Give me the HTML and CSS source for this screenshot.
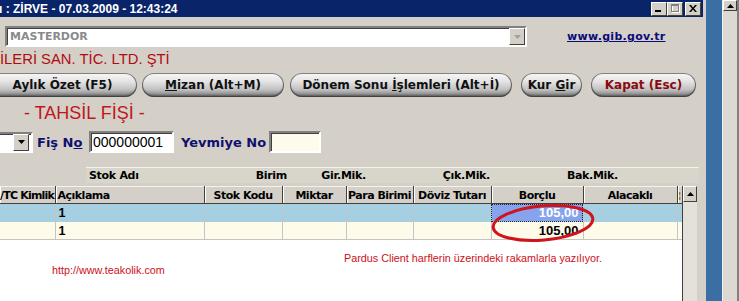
FILE: index.html
```html
<!DOCTYPE html>
<html lang="tr">
<head>
  <meta charset="UTF-8">
  <title>Tahsil Fişi</title>
  <link rel="stylesheet" href="styles.css">
</head>
<body>
  <div class="screen">
    <div class="window">
      <div class="titlebar">
        <span class="title">ı : ZİRVE - 07.03.2009 - 12:43:24</span>
        <div class="caption-btns">
          <span class="cbtn"><svg width="8" height="7" viewBox="0 0 8 7"><rect x="0" y="5" width="6" height="2" fill="#000"/></svg></span>
          <span class="cbtn"><svg width="9" height="9" viewBox="0 0 9 9"><rect x="1.5" y="1.5" width="7" height="7" fill="none" stroke="#fff"/><rect x="0.5" y="0.5" width="7" height="7" fill="none" stroke="#808080"/><rect x="0" y="1" width="8" height="1" fill="#808080"/></svg></span>
          <span class="cbtn close"><svg width="8" height="7" viewBox="0 0 8 7"><path d="M0 0h2l2 2.5L6 0h2L5 3.5 8 7H6L4 4.5 2 7H0l3-3.5z" fill="#000"/></svg></span>
        </div>
      </div>

      <div class="body">
        <div class="top-row">
          <div class="combo firm">
            <span class="combo-text">MASTERDOR</span>
            <span class="drop-btn off"><svg width="7" height="4" viewBox="0 0 7 4"><path d="M0 0h7L3.5 4z" fill="#a0a0a0"/></svg></span>
          </div>
          <a class="gib-link" href="#">www.gib.gov.tr</a>
        </div>

        <div class="company">İLERİ SAN. TİC. LTD. ŞTİ</div>

        <div class="toolbar">
          <button class="pill b-ozet">Aylık Özet (F5)</button>
          <button class="pill b-mizan"><u>M</u>izan (Alt+M)</button>
          <button class="pill b-donem">Dönem Sonu <u>İ</u>şlemleri (Alt+İ)</button>
          <button class="pill b-kur">Kur <u>G</u>ir</button>
          <button class="pill b-kapat">Kapat (Esc)</button>
        </div>

        <h1 class="doc-title">- TAHSİL FİŞİ -</h1>

        <div class="fis-row">
          <div class="combo mini">
            <span class="drop-btn"><svg width="7" height="4" viewBox="0 0 7 4"><path d="M0 0h7L3.5 4z" fill="#000"/></svg></span>
          </div>
          <label class="fis-label fis">Fiş N<u>o</u></label>
          <div class="field fis-no">000000001</div>
          <label class="fis-label yev">Yevmiye No</label>
          <div class="field yev-no"></div>
        </div>

        <div class="stok-bar">
          <span class="sb-ad">Stok Adı</span>
          <span class="sb-birim">Birim</span>
          <span class="sb-gir">Gir.Mik.</span>
          <span class="sb-cik">Çık.Mik.</span>
          <span class="sb-bak">Bak.Mik.</span>
        </div>

        <div class="grid-wrap">
          <div class="grid">
            <table>
              <colgroup>
                <col style="width: 55px">
                <col style="width: 149px">
                <col style="width: 78px">
                <col style="width: 64px">
                <col style="width: 67px">
                <col style="width: 78px">
                <col style="width: 92px">
                <col style="width: 94px">
                <col style="width: 5px">
              </colgroup>
              <thead>
                <tr>
                  <th class="tc">/TC Kimlik</th>
                  <th class="left">Açıklama</th>
                  <th>Stok Kodu</th>
                  <th>Miktar</th>
                  <th>Para Birimi</th>
                  <th>Döviz Tutarı</th>
                  <th>Borçlu</th>
                  <th>Alacaklı</th>
                  <th class="tiny">¦</th>
                </tr>
              </thead>
              <tbody>
                <tr class="row-active">
                  <td></td>
                  <td>1</td>
                  <td></td>
                  <td></td>
                  <td></td>
                  <td></td>
                  <td class="num focus">105,00</td>
                  <td></td>
                  <td></td>
                </tr>
                <tr class="row-cream">
                  <td></td>
                  <td>1</td>
                  <td></td>
                  <td></td>
                  <td></td>
                  <td></td>
                  <td class="num">105,00</td>
                  <td></td>
                  <td></td>
                </tr>
              </tbody>
            </table>
            <div class="notes">
              <p class="note pardus">Pardus Client harflerin üzerindeki rakamlarla yazılıyor.</p>
              <p class="note site">http://www.teakolik.com</p>
            </div>
          </div>
          <div class="vscroll">
            <span class="sb-arrow"><svg width="7" height="4" viewBox="0 0 7 4"><path d="M3.5 0L7 4H0z" fill="#000"/></svg></span>
          </div>
        </div>
      </div>
    </div>

    <div class="desk"></div>
    <div class="outer-scroll">
      <span class="sb-arrow small"><svg width="7" height="4" viewBox="0 0 7 4"><path d="M3.5 0L7 4H0z" fill="#000"/></svg></span>
    </div>

    <!-- red marker drawn over the screenshot -->
    <svg class="marker" width="739" height="301" viewBox="0 0 739 301">
      <ellipse cx="543" cy="223" rx="50" ry="17" transform="rotate(-5 543 223)" fill="none" stroke="#d0141c" stroke-width="3"/>
    </svg>
  </div>
</body>
</html>
```

FILE: styles.css
```css
* {
  margin: 0;
  padding: 0;
  box-sizing: border-box;
}

body {
  font-family: 'Liberation Sans', Arial, sans-serif;
  background-color: #d4d0c8;
  width: 739px;
  height: 301px;
  overflow: hidden;
}

.screen {
  position: relative;
  display: flex;
  width: 739px;
  height: 301px;
  overflow: hidden;
}

/* Window */
.window {
  width: 706px;
  height: 301px;
  display: flex;
  flex-direction: column;
  background-color: #d4d0c8;
  border-right: 3px solid #d4d0c8;
}

.titlebar {
  height: 17px;
  flex-shrink: 0;
  display: flex;
  align-items: center;
  justify-content: space-between;
  background-color: #0a246a;
}

.titlebar .title {
  color: #fff;
  font-size: 12px;
  font-weight: bold;
  white-space: nowrap;
  margin-left: -1px;
}

.caption-btns {
  display: flex;
  margin-right: 2px;
}

.cbtn {
  width: 16px;
  height: 14px;
  display: flex;
  align-items: center;
  justify-content: center;
  background-color: #d4d0c8;
  border: 1px solid;
  border-color: #fff #404040 #404040 #fff;
}

.cbtn.close {
  margin-left: 2px;
}

.body {
  flex: 1;
  display: flex;
  flex-direction: column;
  min-height: 0;
}

/* Firm combo + link */
.top-row {
  display: flex;
  align-items: center;
  margin-top: 9px;
  padding-left: 5px;
  height: 21px;
}

.combo {
  display: flex;
  align-items: center;
  justify-content: space-between;
  height: 21px;
  background-color: #fff;
  border: 2px solid;
  border-color: #808080 #fff #fff #808080;
  box-shadow: inset 1px 1px 0 #404040;
}

.combo.firm {
  width: 522px;
}

.combo-text {
  color: #8a8a8a;
  font-family: 'DejaVu Sans', sans-serif;
  font-size: 11px;
  font-weight: bold;
  padding-left: 3px;
}

.drop-btn {
  width: 16px;
  height: 17px;
  display: flex;
  align-items: center;
  justify-content: center;
  background-color: #d4d0c8;
  border: 1px solid;
  border-color: #fff #404040 #404040 #fff;
}

.gib-link {
  margin-left: 40px;
  color: #0b0b78;
  font-family: 'DejaVu Sans', sans-serif;
  font-size: 11px;
  font-weight: bold;
  letter-spacing: 0.3px;
  text-decoration: underline;
}

.company {
  margin-top: 5px;
  height: 15px;
  line-height: 15px;
  font-size: 14.8px;
  color: #b00c10;
  white-space: nowrap;
}

/* Toolbar buttons */
.toolbar {
  display: flex;
  margin-top: 6px;
  height: 24px;
}

.pill {
  height: 24px;
  border: none;
  border-radius: 12px;
  font-family: 'DejaVu Sans', sans-serif;
  font-size: 12px;
  font-weight: bold;
  color: #111;
  background: linear-gradient(#f8f8f8 0%, #e4e4e4 35%, #c0c0c0 70%, #747474 100%);
  box-shadow: inset 0 0 0 1px rgba(50, 50, 50, 0.6), inset 0 -2px 2px rgba(0, 0, 0, 0.3);
  white-space: nowrap;
}

.b-ozet { width: 149px; margin-left: -12px; }
.b-mizan { width: 142px; margin-left: 5px; }
.b-donem { width: 222px; margin-left: 6px; }
.b-kur { width: 61px; margin-left: 9px; }
.b-kapat { width: 105px; margin-left: 9px; color: #8a0a10; }

.doc-title {
  margin-top: 5px;
  height: 22px;
  line-height: 22px;
  padding-left: 24px;
  font-size: 18px;
  font-weight: normal;
  color: #c0161c;
}

/* Fis row */
.fis-row {
  display: flex;
  align-items: center;
  margin-top: 7px;
  height: 22px;
}

.combo.mini {
  width: 43px;
  margin-left: -10px;
  justify-content: flex-end;
  padding-right: 2px;
}

.fis-label {
  color: #10106e;
  font-family: 'DejaVu Sans', sans-serif;
  font-size: 13px;
  font-weight: bold;
  white-space: nowrap;
}

.fis-label.fis {
  width: 56px;
  padding-left: 4px;
}

.fis-label.yev {
  width: 95px;
  padding-left: 7px;
}

.field {
  height: 22px;
  padding-left: 2px;
  font-size: 14px;
  line-height: 18px;
  background-color: #fff;
  border: 2px solid;
  border-color: #808080 #fff #fff #808080;
  box-shadow: inset 1px 1px 0 #404040;
}

.fis-no { width: 85px; }
.yev-no { width: 52px; background-color: #fffbec; }

/* Stok summary bar */
.stok-bar {
  display: flex;
  margin-top: 14px;
  margin-left: 86px;
  width: 613px;
  height: 16px;
  line-height: 15px;
  font-family: 'DejaVu Sans', sans-serif;
  font-size: 11px;
  font-weight: bold;
  letter-spacing: -0.3px;
  background-color: #d8d5cb;
  border-top: 1px solid #f4f2ee;
  white-space: nowrap;
}

.stok-bar span { text-align: right; }
.stok-bar .sb-ad { width: 114px; text-align: left; padding-left: 3px; }
.sb-birim { width: 87px; }
.sb-gir { width: 79px; }
.sb-cik { width: 124px; }
.sb-bak { width: 128px; }

/* Grid */
.grid-wrap {
  display: flex;
  margin-top: 3px;
  flex: 1;
  min-height: 0;
}

.grid {
  width: 682px;
  background-color: #fff;
  overflow: hidden;
}

.grid table {
  width: 682px;
  table-layout: fixed;
  border-collapse: collapse;
  font-size: 11px;
}

.grid th {
  height: 17px;
  padding: 0 1px;
  font-family: 'DejaVu Sans', sans-serif;
  font-weight: bold;
  letter-spacing: -0.5px;
  text-align: center;
  white-space: nowrap;
  overflow: hidden;
  background-color: #d4d0c8;
  border-top: 1px solid #f4f2ee;
  border-right: 1px solid #404040;
  border-bottom: 1px solid #404040;
  box-shadow: inset 1px 0 0 #fff;
}

.grid th.left { text-align: left; padding-left: 2px; }
.grid th.tc { text-align: left; padding-left: 0; letter-spacing: -0.8px; }
.grid th.tiny { padding: 0; color: #806000; font-size: 9px; }

.grid td {
  height: 18px;
  padding: 0 3px;
  font-weight: bold;
  font-size: 12.5px;
  border-right: 1px solid #c4c4c4;
  border-bottom: 1px solid #c4c4c4;
  white-space: nowrap;
}

.row-active td { background-color: #a6cfe2; border-bottom-color: #a6cfe2; }
.row-cream td { background-color: #fffbea; }

.grid td.num {
  text-align: right;
  font-size: 13px;
  padding-right: 4px;
}

.grid td.focus {
  color: #fff;
  background-color: #86a3ee;
  outline: 1px dotted #222;
  outline-offset: -1px;
}

.notes {
  height: 60px;
  font-size: 10.8px;
  color: #cc1018;
}

.note.pardus {
  padding-top: 12px;
  padding-left: 344px;
}

.note.site {
  padding-top: 0;
  padding-left: 52px;
}

/* Scrollbars */
.vscroll {
  width: 15px;
  background-color: #e4e1da;
  border-left: 1px solid #404040;
}

.sb-arrow {
  display: flex;
  align-items: center;
  justify-content: center;
  width: 100%;
  height: 16px;
  background-color: #d4d0c8;
  border: 1px solid;
  border-color: #fff #404040 #404040 #fff;
}

.sb-arrow.small {
  height: 11px;
}

.desk {
  width: 17px;
  background-color: #3a6ea5;
  border-right: 1px solid #f0f0f0;
}

.outer-scroll {
  flex: 1;
  background-color: #dcd9d2;
  border-right: 2px solid #808080;
}

.marker {
  position: absolute;
  left: 0;
  top: 0;
  pointer-events: none;
}
```
